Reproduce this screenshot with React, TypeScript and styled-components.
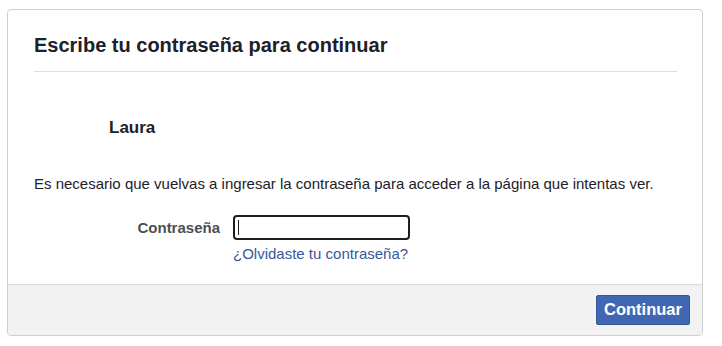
import styled, { createGlobalStyle } from "styled-components";

const GlobalStyle = createGlobalStyle`
  html, body {
    margin: 0;
    padding: 0;
    background: #fff;
  }
  body {
    font-family: "Liberation Sans", Arial, Helvetica, sans-serif;
    color: #1d2129;
  }
`;

const Card = styled.div`
  box-sizing: border-box;
  margin: 9px 0 0 7px;
  width: 696px;
  height: 327px;
  border: 1px solid #ccd0d5;
  border-radius: 4px;
  background: #fff;
  display: flex;
  flex-direction: column;
  overflow: hidden;
`;

const Header = styled.div`
  margin: 0 25px 0 26px;
  height: 62px;
  border-bottom: 1px solid #dadde1;
  display: flex;
  align-items: center;
  box-sizing: border-box;
`;

const Title = styled.h2`
  margin: 8px 0 0;
  font-size: 20px;
  line-height: 24px;
  font-weight: bold;
  color: #1d2129;
`;

const Body = styled.div`
  flex: 1;
  padding: 0 26px;
  display: flex;
  flex-direction: column;
`;

const UserName = styled.div`
  margin: 46px 0 0 75px;
  font-size: 17px;
  line-height: 20px;
  font-weight: bold;
  color: #1d2129;
`;

const Notice = styled.p`
  margin: 37px 0 0;
  font-size: 15px;
  line-height: 18px;
  color: #1d2129;
`;

const FieldRow = styled.div`
  display: grid;
  grid-template-columns: 186px 177px;
  column-gap: 13px;
  row-gap: 5px;
  margin-top: 22px;
  align-items: center;
`;

const Label = styled.label`
  text-align: right;
  font-size: 15px;
  line-height: 18px;
  font-weight: bold;
  color: #4b4f56;
`;

const Input = styled.div`
  box-sizing: border-box;
  height: 25px;
  border: 2px solid #1c1e21;
  border-radius: 4px;
  display: flex;
  align-items: center;
  padding-left: 3px;
`;

const Caret = styled.span`
  width: 1px;
  height: 15px;
  background: #1c1e21;
`;

const Forgot = styled.a`
  grid-column: 2 / span 1;
  font-size: 15px;
  line-height: 18px;
  color: #385898;
  text-decoration: none;
  white-space: nowrap;
`;

const Footer = styled.div`
  height: 51px;
  border-top: 1px solid #dadde1;
  background: #f2f2f2;
  display: flex;
  align-items: center;
  justify-content: flex-end;
  padding: 0 12px;
  box-sizing: border-box;
`;

const Button = styled.button`
  box-sizing: border-box;
  height: 30px;
  width: 94px;
  background: #4267b2;
  border: 1px solid #365899;
  border-radius: 2px;
  color: #fff;
  font-family: "Liberation Sans", Arial, sans-serif;
  font-size: 16.5px;
  font-weight: bold;
  padding: 0;
  margin-top: -1px;
`;

export default function App() {
  return (
    <>
      <GlobalStyle />
      <Card>
        <Header>
          <Title>Escribe tu contraseña para continuar</Title>
        </Header>
        <Body>
          <UserName>Laura</UserName>
          <Notice>
            Es necesario que vuelvas a ingresar la contraseña para acceder a la
            página que intentas ver.
          </Notice>
          <FieldRow>
            <Label>Contraseña</Label>
            <Input>
              <Caret />
            </Input>
            <Forgot href="#">¿Olvidaste tu contraseña?</Forgot>
          </FieldRow>
        </Body>
        <Footer>
          <Button>Continuar</Button>
        </Footer>
      </Card>
    </>
  );
}
